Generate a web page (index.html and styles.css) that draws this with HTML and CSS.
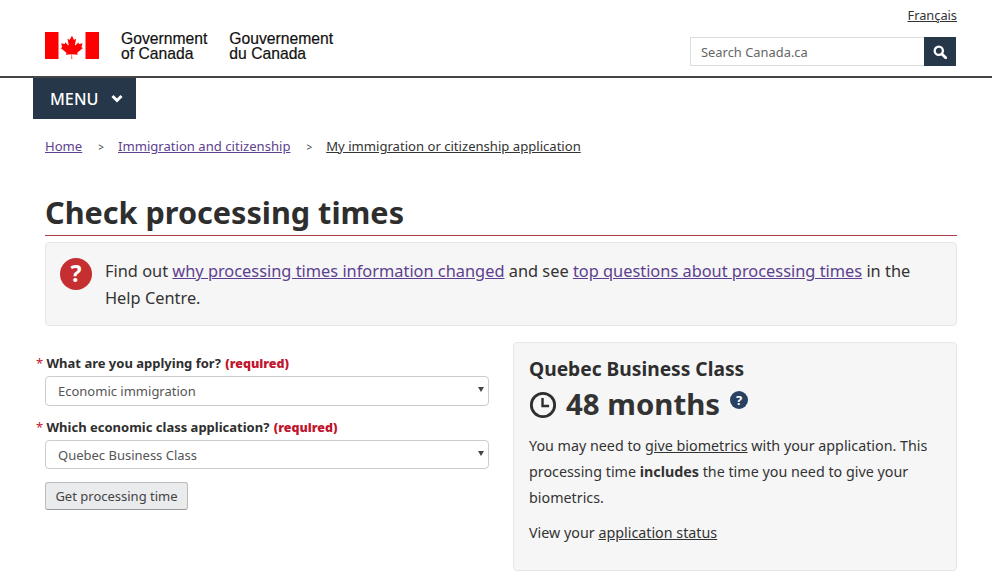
FILE: index.html
```html
<!DOCTYPE html>
<html lang="en">
<head>
<meta charset="utf-8">
<title>Check processing times</title>
<link rel="stylesheet" href="styles.css">
</head>
<body>
<header class="site-header">
  <div class="header-inner">
    <div class="brand">
      <svg class="flag" viewBox="0 0 54 27" aria-hidden="true">
        <rect x="0" y="0" width="13.500" height="27" fill="#f00"/>
        <rect x="40.500" y="0" width="13.500" height="27" fill="#f00"/>
        <path fill="#f00" d="M27 2.500l-2.200 4.100c-.25.45-.7.4-1.150.15l-1.600-.83 1.190 6.330c.25 1.160-.55 1.160-.95.660l-2.790-3.120-.45 1.590c-.05.2-.28.43-.6.380l-3.530-.74.930 3.370c.2.750.35 1.060-.2 1.260l-1.260.59 6.080 4.940c.24.19.36.52.27.82l-.53 1.750 6.050-.7c.19 0 .31.1.31.31l-.28 6.050h1.020l-.28-6.050c0-.2.13-.31.31-.31l6.050.7-.53-1.750c-.09-.3.03-.63.27-.82l6.080-4.940-1.260-.59c-.55-.2-.4-.51-.2-1.260l.93-3.370-3.530.74c-.32.05-.55-.18-.6-.38l-.45-1.590-2.790 3.120c-.4.5-1.200.5-.95-.66l1.190-6.330-1.600.83c-.45.25-.9.3-1.150-.15z" transform="translate(2.700 1.400) scale(.9)"/>
      </svg>
      <div class="sig">Government<br>of Canada</div>
      <div class="sig sig-fr">Gouvernement<br>du Canada</div>
    </div>
    <div class="header-right">
      <a class="lang" href="#">Français</a>
      <form class="search">
        <input class="search-input" type="text" placeholder="Search Canada.ca">
        <button class="search-btn" type="button" aria-label="Search">
          <svg viewBox="0 0 16 16" width="14" height="14" aria-hidden="true"><circle cx="6.600" cy="6.600" r="4.700" fill="none" stroke="#fff" stroke-width="2.600"/><path d="M10.200 10.200l4.300 4.300" stroke="#fff" stroke-width="3.200" stroke-linecap="round"/></svg>
        </button>
      </form>
    </div>
  </div>
</header>

<nav class="menu-row">
  <button class="menu-btn" type="button">MENU
    <svg viewBox="0 0 12 9" width="12" height="9" aria-hidden="true"><path d="M1.500 2l4.500 4.500L10.500 2" fill="none" stroke="#fff" stroke-width="3"/></svg>
  </button>
</nav>

<ol class="crumbs">
  <li><a href="#">Home</a></li>
  <li><a href="#">Immigration and citizenship</a></li>
  <li><a class="current" href="#">My immigration or citizenship application</a></li>
</ol>

<main class="content">
  <h1 class="title">Check processing times</h1>
  <div class="notice">
    <svg class="notice-icon" viewBox="0 0 32 32" aria-hidden="true">
      <circle cx="16" cy="16" r="16" fill="#c52f31"/>
      <text x="16" y="23.500" text-anchor="middle" class="notice-q">?</text>
    </svg>
    <p class="notice-text">Find out <a href="#">why processing times information changed</a> and see <a href="#">top questions about processing times</a> in the Help Centre.</p>
  </div>

  <div class="columns">
    <form class="form">
      <label class="label"><span class="star">*</span> What are you applying for? <strong class="req">(required)</strong></label>
      <div class="select-wrap sel-a">
        <select class="select"><option>Economic immigration</option></select>
      </div>
      <label class="label"><span class="star">*</span> Which economic class application? <strong class="req">(required)</strong></label>
      <div class="select-wrap sel-b">
        <select class="select"><option>Quebec Business Class</option></select>
      </div>
      <button class="submit" type="button">Get processing time</button>
    </form>

    <section class="panel">
      <h2 class="panel-title">Quebec Business Class</h2>
      <div class="duration">
        <svg class="clock" viewBox="0 0 30 30" aria-hidden="true"><circle cx="15" cy="15" r="12.500" fill="none" stroke="#2e2e2e" stroke-width="3"/><path d="M14.500 7.500v8.500h7" fill="none" stroke="#2e2e2e" stroke-width="2.600"/></svg>
        <span>48 months</span>
        <svg class="help" viewBox="0 0 18 18" aria-hidden="true"><circle cx="9" cy="9" r="9" fill="#284162"/><text x="9" y="14" text-anchor="middle" class="help-q">?</text></svg>
      </div>
      <p class="panel-text">You may need to <a href="#">give biometrics</a> with your application. This processing time <strong>includes</strong> the time you need to give your biometrics.</p>
      <p class="panel-text status">View your <a href="#">application status</a></p>
    </section>
  </div>
</main>
</body>
</html>
```
FILE: styles.css
```css
* { box-sizing: border-box; }
html, body { margin: 0; padding: 0; }
body {
  background: #fff;
  color: #333;
  font-family: "Noto Sans", "Open Sans", sans-serif;
  font-size: 16px;
  height: 584px;
  overflow: hidden;
}
.site-header {
  border-bottom: 2px solid #444;
  height: 78px;
  padding: 0 35px 0 45px;
}
.header-inner {
  display: flex;
  justify-content: space-between;
}
.brand {
  display: flex;
  align-items: flex-start;
  padding-top: 31px;
}
.flag { width: 54px; height: 27px; margin-top: 1px; display: block; }
.sig {
  font-family: "Liberation Sans", Arial, sans-serif;
  font-size: 15.700px;
  line-height: 15px;
  color: #111;
  margin-left: 22px;
  -webkit-text-stroke: .2px #111;
}
.header-right {
  display: flex;
  flex-direction: column;
  align-items: flex-end;
  padding-top: 6px;
  width: 267px;
}
.lang { font-size: 12.800px; line-height: 18px; color: #333; }
.search { display: flex; margin-top: 13px; margin-right: 1px; }
.search-input {
  width: 234px;
  height: 29px;
  border: 1px solid #ddd;
  border-right: 0;
  padding: 0 10px;
  font: 12.900px "Noto Sans", sans-serif;
  color: #555;
  background: #fff;
  outline: 0;
}
.search-input::placeholder { color: #666; opacity: 1; }
.search-btn {
  width: 32px;
  height: 29px;
  background: #26374a;
  border: 0;
  padding: 0;
  display: flex;
  align-items: center;
  justify-content: center;
}
.menu-row { padding-left: 33px; height: 41px; }
.menu-btn {
  width: 103px;
  height: 41px;
  background: #26374a;
  color: #fff;
  border: 0;
  padding: 0 0 0 17px;
  display: flex;
  align-items: center;
  gap: 13px;
  font: 500 16.200px "Noto Sans", sans-serif;
}
.crumbs {
  list-style: none;
  display: flex;
  margin: 18px 0 0;
  padding: 0 0 0 45px;
  font-size: 13.100px;
  line-height: 18px;
}
.crumbs li + li::before {
  content: ">";
  font-size: 10px;
  color: #444;
  margin: 0 14px 0 16px;
}
.crumbs a { color: #5d3f8f; }
.crumbs a.current { color: #333; }
.content { padding: 0 35px 0 45px; }
.title {
  margin: 36px 0 0;
  font-size: 30.600px;
  line-height: 41px;
  font-weight: 700;
  color: #2e2e2e;
  border-bottom: 1px solid #af3c43;
  height: 44px;
}
.notice {
  margin-top: 6px;
  height: 84px;
  background: #f6f6f6;
  border: 1px solid #e6e6e6;
  border-radius: 4px;
  padding: 15px 40px 0 14px;
  display: flex;
  gap: 13px;
}
.notice-icon { width: 32px; height: 32px; flex: none; }
.notice-q { font: 700 23px "Noto Sans", sans-serif; fill: #fff; }
.notice-text { margin: 0; font-size: 16.370px; line-height: 27px; color: #333; }
.notice-text a { color: #5d3f8f; }
.columns {
  display: grid;
  grid-template-columns: 444px 444px;
  gap: 24px;
  margin-top: 16px;
}
.form { display: flex; flex-direction: column; align-items: flex-start; padding-top: 12px; }
.label {
  font-size: 13px;
  line-height: 18px;
  font-weight: 700;
  color: #2e2e2e;
  margin-left: -9px;
}
.star { color: #c0162f; font-weight: 400; }
.req { color: #c0162f; font-size: 12.400px; margin-left: 1px; }
.select-wrap { position: relative; width: 444px; margin-top: 3px; margin-bottom: 12px; }
.select-wrap::after {
  content: "";
  position: absolute;
  right: 5px;
  top: 11px;
  border-left: 3px solid transparent;
  border-right: 3px solid transparent;
  border-top: 5px solid #444;
}
.sel-a .select { height: 30px; }
.sel-b { margin-bottom: 13px; }
.sel-b .select { height: 29px; }
.select {
  appearance: none;
  -webkit-appearance: none;
  display: block;
  width: 100%;
  border: 1px solid #ccc;
  border-radius: 4px;
  background: #fff;
  padding: 0 12px;
  font: 13px "Noto Sans", sans-serif;
  color: #555;
}
.submit {
  width: 143px;
  height: 28px;
  padding: 0;
  background: #eaebed;
  border: 1px solid #bbb;
  border-bottom-color: #999;
  border-radius: 3px;
  font: 13px "Noto Sans", sans-serif;
  color: #444;
}
.panel {
  height: 229px;
  background: #f6f6f6;
  border: 1px solid #e6e6e6;
  border-radius: 4px;
  padding: 13px 14px 0;
}
.panel-title {
  margin: 0 0 0 1px;
  font-size: 19.200px;
  line-height: 26px;
  font-weight: 700;
  color: #2e2e2e;
}
.duration {
  display: flex;
  align-items: center;
  font-size: 29.400px;
  line-height: 41px;
  font-weight: 700;
  color: #333;
  height: 41px;
  margin-top: 2px;
}
.clock { width: 28px; height: 28px; margin: 0 9px 0 1px; }
.help { width: 18px; height: 18px; margin: -10px 0 0 10px; }
.help-q { font: 700 13px "Noto Sans", sans-serif; fill: #fff; }
.panel-text {
  margin: 8px 0 0 1px;
  font-size: 14.300px;
  line-height: 26px;
  color: #333;
}
.panel-text a { color: #333; }
.status { margin-top: 9px; }
```
